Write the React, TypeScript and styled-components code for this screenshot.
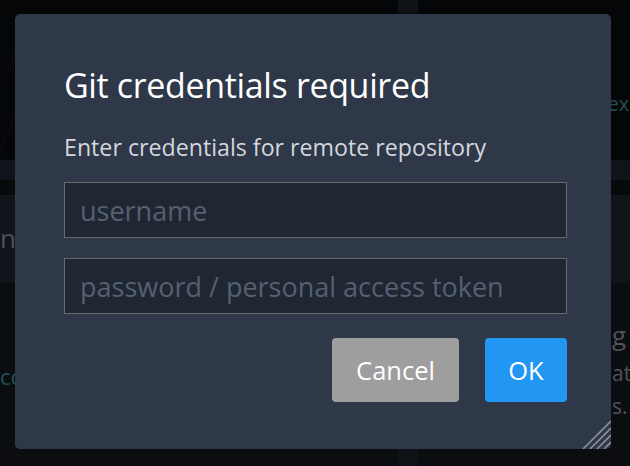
import React from "react";
import styled, { createGlobalStyle } from "styled-components";

const Global = createGlobalStyle`
  html, body { margin: 0; padding: 0; height: 100%; background: #060708; overflow: hidden; }
  #root { height: 100%; }
  * { box-sizing: border-box; }
`;

const Page = styled.div`
  position: relative;
  width: 630px;
  height: 466px;
  display: grid;
  grid-template-columns: 398px 20px 1fr;
  background: #060708;
  font-family: "Open Sans", "Noto Sans", sans-serif;
  overflow: hidden;
`;

const Column = styled.div`
  display: grid;
  grid-template-rows: 160px 20px 15px 88px 1fr;
  min-width: 0;
  overflow: hidden;
`;

const Divider = styled.div`
  background: #0b0d10;
  display: grid;
  grid-template-rows: 13px 1fr 17px;
  & > div:first-child, & > div:last-child { background: #0f1216; }
`;

const Top = styled.div<{ $align: "left" | "right" }>`
  background: #050607;
  display: flex;
  flex-direction: column;
  justify-content: flex-start;
  align-items: ${(p) => (p.$align === "left" ? "flex-start" : "flex-end")};
  padding: 88px 2px 0 0;
  position: relative;
`;

const Band = styled.div<{ $tone: string }>`
  background: ${(p) => p.$tone};
`;

const Panel = styled.div`
  background: #111418;
  display: flex;
  align-items: center;
  justify-content: flex-start;
`;

const Bottom = styled.div<{ $offset: number }>`
  background: #0b0d10;
  display: flex;
  flex-direction: column;
  padding-top: ${(p) => p.$offset}px;
`;

const BgText = styled.span<{ $color: string; $size: number }>`
  color: ${(p) => p.$color};
  font-size: ${(p) => p.$size}px;
  line-height: 1.6;
  white-space: nowrap;
`;

const RightText = styled(BgText)`
  margin-left: 194px;
`;

const Lines = styled.svg`
  position: absolute;
  left: 0;
  top: 0;
`;

const Overlay = styled.div`
  position: absolute;
  inset: 0;
  padding: 14px 19px 17px 15px;
  display: flex;
`;

const Dialog = styled.div`
  position: relative;
  flex: 1;
  background: #2e3849;
  border-radius: 5px;
  padding: 54px 44px 0 49px;
  display: flex;
  flex-direction: column;
  font-family: "Open Sans", "Noto Sans", sans-serif;
`;

const Title = styled.h1`
  margin: 0;
  font-size: 34px;
  line-height: 34px;
  font-weight: 400;
  color: #ffffff;
  letter-spacing: -0.35px;
  white-space: nowrap;
`;

const Subtitle = styled.p`
  margin: 32px 0 0;
  font-size: 23.2px;
  line-height: 26px;
  color: #d3d7dd;
  white-space: nowrap;
`;

const Fields = styled.div`
  margin-top: 22px;
  display: flex;
  flex-direction: column;
  gap: 20px;
`;

const Input = styled.input`
  height: 56px;
  width: 100%;
  background: #1f2733;
  border: 1.5px solid #6a6a6a;
  border-radius: 0;
  padding: 0 15px;
  font-family: inherit;
  font-size: 27px;
  color: #ffffff;
  outline: none;
  &::placeholder { color: #566070; }
`;

const Actions = styled.div`
  margin-top: 24px;
  display: flex;
  justify-content: flex-end;
  gap: 26px;
`;

const Button = styled.button<{ $primary?: boolean }>`
  height: 64px;
  padding: 0 ${(p) => (p.$primary ? 20 : 22)}px;
  min-width: ${(p) => (p.$primary ? 82 : 127)}px;
  border: none;
  border-radius: 4px;
  background: ${(p) => (p.$primary ? "#2196f3" : "#9e9e9e")};
  color: #ffffff;
  font-family: inherit;
  font-size: 25.5px;
  cursor: pointer;
`;

const Grip = styled.svg`
  position: absolute;
  right: 0;
  bottom: 0;
`;

export default function App() {
  return (
    <>
      <Global />
      <Page>
        <Column>
          <Top $align="left">
            <Lines width="60" height="160" viewBox="0 0 60 160">
              <line x1="0" y1="150" x2="40" y2="60" stroke="#1a0c0c" strokeWidth="1" />
              <line x1="0" y1="90" x2="30" y2="20" stroke="#170a0a" strokeWidth="1" />
            </Lines>
          </Top>
          <Band $tone="#101319" />
          <Band $tone="#08090b" />
          <Panel>
            <BgText $color="#4e5257" $size={26}>nt</BgText>
          </Panel>
          <Bottom $offset={76}>
            <BgText $color="#215357" $size={22}>co</BgText>
          </Bottom>
        </Column>
        <Divider>
          <div />
          <div />
          <div />
        </Divider>
        <Column>
          <Top $align="right">
            <BgText $color="#215357" $size={20}>ex</BgText>
          </Top>
          <Band $tone="#101319" />
          <Band $tone="#08090b" />
          <Panel />
          <Bottom $offset={32}>
            <RightText $color="#4e5257" $size={26}>g</RightText>
            <RightText $color="#4e5257" $size={21}>at</RightText>
            <RightText $color="#4e5257" $size={21}>s.</RightText>
          </Bottom>
        </Column>
        <Overlay>
          <Dialog>
            <Title>Git credentials required</Title>
            <Subtitle>Enter credentials for remote repository</Subtitle>
            <Fields>
              <Input placeholder="username" />
              <Input type="password" placeholder="password / personal access token" />
            </Fields>
            <Actions>
              <Button>Cancel</Button>
              <Button $primary>OK</Button>
            </Actions>
            <Grip width="30" height="30" viewBox="0 0 30 30">
              <g stroke="#8a909b" strokeWidth="1.7">
                <line x1="2" y1="30" x2="30" y2="2" />
                <line x1="9" y1="30" x2="30" y2="9" />
                <line x1="16" y1="30" x2="30" y2="16" />
                <line x1="23" y1="30" x2="30" y2="23" />
              </g>
            </Grip>
          </Dialog>
        </Overlay>
      </Page>
    </>
  );
}
